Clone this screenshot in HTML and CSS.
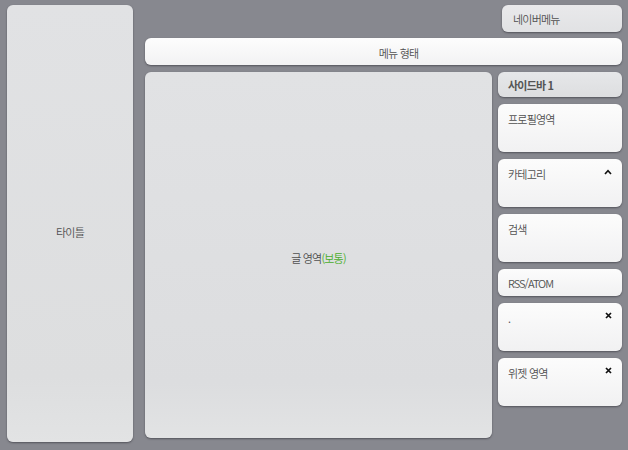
FILE: index.html
```html
<!DOCTYPE html>
<html lang="ko">
<head>
<meta charset="utf-8">
<link rel="stylesheet" href="styles.css">
</head>
<body>
<div class="layout">
  <div class="box title-box"><span>타이틀</span></div>
  <div class="main">
    <div class="top-row"><div class="box navbar">네이버메뉴</div></div>
    <div class="box menu-bar">메뉴 형태</div>
    <div class="body-row">
      <div class="box content"><span>글 영역<em>(보통)</em></span></div>
      <div class="sidebar">
        <div class="box side-head">사이드바 1</div>
        <div class="box widget">프로필영역</div>
        <div class="box widget">카테고리
          <svg class="icon caret" viewBox="0 0 8 6" width="8" height="6"><path d="M1 5 L4 1.6 L7 5" fill="none" stroke="#111" stroke-width="1.6"/></svg>
        </div>
        <div class="box widget">검색</div>
        <div class="box widget short">RSS/ATOM</div>
        <div class="box widget">.
          <svg class="icon close" viewBox="0 0 7 7" width="7" height="7"><path d="M1 1 L6 6 M6 1 L1 6" stroke="#111" stroke-width="1.7"/></svg>
        </div>
        <div class="box widget">위젯 영역
          <svg class="icon close" viewBox="0 0 7 7" width="7" height="7"><path d="M1 1 L6 6 M6 1 L1 6" stroke="#111" stroke-width="1.7"/></svg>
        </div>
      </div>
    </div>
  </div>
</div>
</body>
</html>
```

FILE: styles.css
```css
* { box-sizing: border-box; }
html, body { margin: 0; padding: 0; }
body {
  background: #87888f;
  width: 628px;
  height: 450px;
  overflow: hidden;
  font-family: "Noto Sans CJK KR", "Noto Sans", sans-serif;
  font-size: 11px;
  font-weight: 350;
  color: #505050;
  letter-spacing: -0.8px;
}
.layout {
  display: flex;
  gap: 12px;
  padding: 5px 6px 0 7px;
}
.box {
  border-radius: 6px;
  box-shadow: 0 1px 2px rgba(40, 40, 48, 0.55);
}
.title-box {
  width: 126px;
  height: 437px;
  background: linear-gradient(#e1e2e4, #dddedf 85%, #e2e3e4);
  display: flex;
  align-items: center;
  justify-content: center;
  padding-top: 16px;
}
.main {
  flex: 1;
  display: flex;
  flex-direction: column;
}
.top-row {
  display: flex;
  justify-content: flex-end;
}
.navbar {
  width: 120px;
  height: 27px;
  background: linear-gradient(#e9e9eb, #e1e2e4);
  padding: 7px 0 0 11px;
  line-height: 14px;
}
.menu-bar {
  margin-top: 6px;
  height: 27px;
  background: linear-gradient(#fdfdfd, #f2f2f3);
  display: flex;
  align-items: center;
  justify-content: center;
  padding-left: 30px;
  padding-top: 2px;
}
.body-row {
  margin-top: 7px;
  display: flex;
  gap: 6px;
}
.content {
  width: 347px;
  height: 366px;
  background: linear-gradient(#e1e2e4, #dcdddf 85%, #e2e3e4);
  display: flex;
  align-items: center;
  justify-content: center;
  padding-top: 6px;
}
.content em {
  font-style: normal;
  color: #49ad2a;
}
.sidebar {
  width: 124px;
  display: flex;
  flex-direction: column;
  gap: 7px;
}
.side-head {
  height: 25px;
  background: linear-gradient(#e6e7e9, #dddee0);
  font-weight: bold;
  padding: 6px 0 0 10px;
  line-height: 15px;
  color: #555;
}
.widget {
  position: relative;
  height: 48px;
  background: linear-gradient(#fcfcfc, #f1f1f2);
  padding: 7px 0 0 10px;
  line-height: 16px;
}
.widget.short {
  height: 27px;
  padding-top: 6px;
  letter-spacing: -1px;
}
.icon {
  position: absolute;
  right: 10px;
  top: 9px;
}
.caret { top: 10px; }
```
